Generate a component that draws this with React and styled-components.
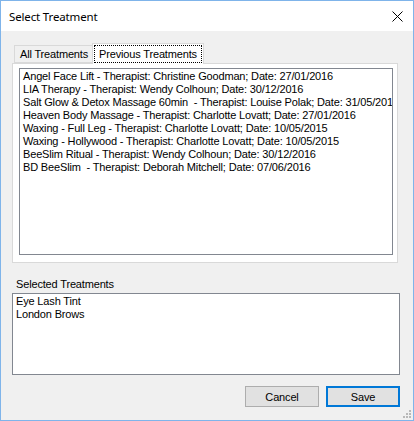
import styled, { createGlobalStyle } from "styled-components"

const Global = createGlobalStyle`
    body {
        margin: 0;
        background: #fff;
    }
`

const Window = styled.div`
    position: relative;
    width: 414px;
    height: 421px;
    box-sizing: border-box;
    border: 1px solid #7fb4ea;
    display: flex;
    flex-direction: column;
    font-family: 'Liberation Sans', Arial, sans-serif;
    font-size: 11px;
    letter-spacing: -0.16px;
    color: #000;
    overflow: hidden;
`

const TitleBar = styled.div`
    height: 30px;
    flex-shrink: 0;
    background: #fff;
    display: flex;
    align-items: center;
    justify-content: space-between;
    padding-left: 8px;
    padding-right: 10px;
    font-family: 'Noto Sans', 'Open Sans', sans-serif;
    font-size: 11.5px;
    letter-spacing: -0.15px;
`

const Close = styled.svg`
    width: 11px;
    height: 11px;
`

const Body = styled.div`
    flex: 1;
    background: #f0f0f0;
    display: flex;
    flex-direction: column;
    padding: 12px 0 0 11px;
`

const TabStrip = styled.div`
    display: flex;
    align-items: flex-end;
    height: 20px;
    padding-left: 2px;
    position: relative;
    z-index: 1;
`

const Tab = styled.div`
    box-sizing: border-box;
    height: ${p => (p.$active ? "21px" : "18px")};
    margin-bottom: ${p => (p.$active ? "-1px" : "0")};
    padding: ${p => (p.$active ? "1px 1px 0" : "0 4px 0 5px")};
    background: ${p => (p.$active ? "#fff" : "#f0f0f0")};
    border: 1px solid #d9d9d9;
    border-bottom: ${p => (p.$active ? "none" : "1px solid #d9d9d9")};
    margin-left: ${p => (p.$active ? "-1px" : "0")};
    display: flex;
    align-items: ${p => (p.$active ? "flex-start" : "center")};
    line-height: 13px;
    white-space: nowrap;
`

const Focus = styled.span`
    display: block;
    border: 1px dotted #000;
    padding: 2px 4px 1px;
`

const Panel = styled.div`
    width: 386px;
    height: 200px;
    box-sizing: border-box;
    border: 1px solid #d9d9d9;
    background: #fff;
    padding: 4px 4px 7px 6px;
`

const ListBox = styled.div`
    box-sizing: border-box;
    width: ${p => p.$width}px;
    height: ${p => p.$height}px;
    border: 1px solid #828790;
    background: #fff;
    padding: 1px 3px;
    overflow: hidden;
`

const Item = styled.div`
    line-height: 13px;
    white-space: pre;
`

const Label = styled.div`
    margin: 15px 0 2px 4px;
    line-height: 13px;
`

const Buttons = styled.div`
    display: flex;
    justify-content: flex-end;
    gap: 7px;
    margin-top: 11px;
    width: 388px;
`

const Button = styled.div`
    box-sizing: border-box;
    width: 74px;
    height: 21px;
    background: #e1e1e1;
    border: ${p => (p.$default ? "2px solid #0078d7" : "1px solid #adadad")};
    display: flex;
    align-items: center;
    justify-content: center;
`

const Grip = styled.svg`
    position: absolute;
    right: 1px;
    bottom: 1px;
    width: 10px;
    height: 10px;
`

const previous = [
    "Angel Face Lift - Therapist: Christine Goodman; Date: 27/01/2016",
    "LIA Therapy - Therapist: Wendy Colhoun; Date: 30/12/2016",
    "Salt Glow & Detox Massage 60min  - Therapist: Louise Polak; Date: 31/05/2016",
    "Heaven Body Massage - Therapist: Charlotte Lovatt; Date: 27/01/2016",
    "Waxing - Full Leg - Therapist: Charlotte Lovatt; Date: 10/05/2015",
    "Waxing - Hollywood - Therapist: Charlotte Lovatt; Date: 10/05/2015",
    "BeeSlim Ritual - Therapist: Wendy Colhoun; Date: 30/12/2016",
    "BD BeeSlim  - Therapist: Deborah Mitchell; Date: 07/06/2016",
]

const selected = ["Eye Lash Tint", "London Brows"]

export default function App() {
    return (
        <>
            <Global />
            <Window>
                <TitleBar>
                    <span>Select Treatment</span>
                    <Close viewBox="0 0 11 11">
                        <path d="M0.5 0.5 L10.5 10.5 M10.5 0.5 L0.5 10.5" stroke="#000" strokeWidth="1" fill="none" />
                    </Close>
                </TitleBar>
                <Body>
                    <TabStrip>
                        <Tab>All Treatments</Tab>
                        <Tab $active>
                            <Focus>Previous Treatments</Focus>
                        </Tab>
                    </TabStrip>
                    <Panel>
                        <ListBox $width={374} $height={187}>
                            {previous.map(t => (
                                <Item key={t}>{t}</Item>
                            ))}
                        </ListBox>
                    </Panel>
                    <Label>Selected Treatments</Label>
                    <ListBox $width={388} $height={82}>
                        {selected.map(t => (
                            <Item key={t}>{t}</Item>
                        ))}
                    </ListBox>
                    <Buttons>
                        <Button>Cancel</Button>
                        <Button $default>Save</Button>
                    </Buttons>
                </Body>
                <Grip viewBox="0 0 10 10">
                    {[[7, 1], [4, 4], [7, 4], [1, 7], [4, 7], [7, 7]].map(([x, y]) => (
                        <rect key={`${x}-${y}`} x={x} y={y} width="2" height="2" fill="#b8b8b8" />
                    ))}
                </Grip>
            </Window>
        </>
    )
}
